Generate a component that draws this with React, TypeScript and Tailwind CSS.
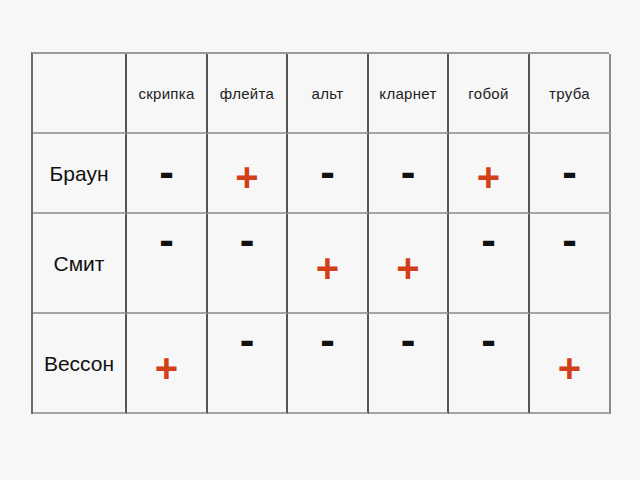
import React from "react";

type Sign = "+" | "-";

const headers = ["скрипка", "флейта", "альт", "кларнет", "гобой", "труба"];
const rows: { name: string; signs: Sign[] }[] = [
  { name: "Браун", signs: ["-", "+", "-", "-", "+", "-"] },
  { name: "Смит", signs: ["-", "-", "+", "+", "-", "-"] },
  { name: "Вессон", signs: ["+", "-", "-", "-", "-", "+"] },
];

const rowH = ["h-[80px]", "h-[100px]", "h-[100px]"];

function SignCell({ sign, row, last }: { sign: Sign; row: number; last: boolean }) {
  const first = row === 0;
  let mt = "";
  if (sign === "-") mt = first ? "mt-[16px]" : "mt-[4px]";
  else mt = first ? "mt-[23px]" : "mt-[34px]";
  return (
    <div
      className={`flex flex-col items-center border-b-2 border-b-[#a4a4a4] ${
        last ? "border-r-2 border-r-[#8a8a8a]" : "border-r-2 border-r-[#555555]"
      } ${rowH[row]}`}
    >
      {sign === "-" ? (
        <span className={`block leading-none text-[44px] font-bold text-[#111] ${mt}`}>-</span>
      ) : (
        <span className={`block leading-none text-[40px] font-bold text-[#d2401a] ${mt}`}>+</span>
      )}
    </div>
  );
}

export default function App() {
  return (
    <div
      className="w-[640px] h-[480px] bg-[#f7f7f7] pt-[52px] pl-[31px]"
      style={{ fontFamily: '"Liberation Sans", Arial, sans-serif' }}
    >
      <div className="grid grid-cols-[94px_81px_80px_81px_80px_81px_81px] w-[578px] border-t-2 border-t-[#9a9a9a] border-l-2 border-l-[#6a6a6a]">
        <div className="h-[80px] border-b-2 border-b-[#a4a4a4] border-r-2 border-r-[#555555]" />
        {headers.map((h, i) => (
          <div
            key={h}
            className={`h-[80px] flex justify-center border-b-2 border-b-[#a4a4a4] ${
              i === headers.length - 1 ? "border-r-2 border-r-[#8a8a8a]" : "border-r-2 border-r-[#555555]"
            }`}
          >
            <span className="block mt-[32px] leading-none text-[15px] tracking-[0.3px] text-[#222]">{h}</span>
          </div>
        ))}
        {rows.map((r, ri) => (
          <React.Fragment key={r.name}>
            <div
              className={`flex items-center justify-center border-b-2 border-b-[#a4a4a4] border-r-2 border-r-[#555555] ${rowH[ri]}`}
            >
              <span className="leading-none text-[21px] text-[#111]">{r.name}</span>
            </div>
            {r.signs.map((s, si) => (
              <SignCell key={si} sign={s} row={ri} last={si === r.signs.length - 1} />
            ))}
          </React.Fragment>
        ))}
      </div>
    </div>
  );
}
